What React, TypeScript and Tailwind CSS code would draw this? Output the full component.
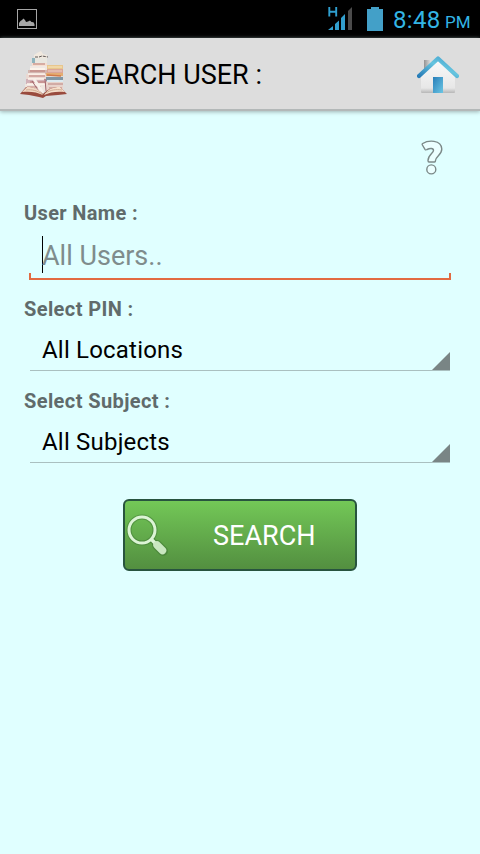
interface SpinnerProps {
  label: string
  value: string
}

function StatusBar() {
  return (
    <div className="flex h-[38px] items-center justify-between bg-black pl-[17px] pr-[10px]">
      <svg width="20" height="20" viewBox="0 0 20 20">
        <rect x="0.5" y="0.5" width="19" height="19" fill="none" stroke="#a6a6a6" />
        <path d="M2 17v-3l1.500-2L5 11l1.500-1.500L8 11l1 2 2-.5 2-1 1.500 1.500 2 .2 1 2v1.800z" fill="#a6a6a6" />
      </svg>
      <div className="flex items-center">
        <svg width="25" height="24" viewBox="0 0 25 24" className="mr-[14px]">
          <path d="M1.300 0v9.500M8.200 0v9.500M1.300 4.700h7" stroke="#2f9fd0" strokeWidth="1.900" fill="none" />
          <path d="M0 23l5-4v4zM7 23v-6l4-3.500V23zM13 23V11l4-4v16z" fill="#329fce" />
          <path d="M20 23V4l4-4v23z" fill="#4b4b4b" />
        </svg>
        <svg width="16" height="24" viewBox="0 0 16 24" className="mr-[10px]">
          <path d="M0 2h4V0h8v2h4v22H0z" fill="#43a0c8" />
        </svg>
        <div className="flex items-baseline pt-[3px] text-[#33b5e5]">
          <span className="w-[52px] text-[24px] leading-[35px] tracking-[0.3px] whitespace-nowrap">8:48</span>
          <span className="w-[25px] text-[17px] whitespace-nowrap">PM</span>
        </div>
      </div>
    </div>
  )
}

function BooksIcon() {
  return (
    <svg width="48" height="48" viewBox="0 0 48 48">
      {/* stacked volumes on the left */}
      <path d="M14 4l3-2 4-2 2 3 4 1v3l-3 1-10 1z" fill="#f1e9df" />
      <path d="M15 6h4l3-1 6 1" stroke="#615a58" strokeWidth="1" strokeDasharray="3 1" fill="none" />
      <path d="M12 7h15v5H12z" fill="#e9e7e0" />
      <path d="M12 7h3v5h-3z" fill="#8fb4bd" />
      <path d="M12 12h15v3H12z" fill="#f6ded0" />
      <path d="M13 13h12" stroke="#b77a74" />
      <path d="M10 15h17v4H10z" fill="#f0e8e3" />
      <path d="M8 19h19v4H8z" fill="#d3b6b0" />
      <path d="M6 23h21v5H6z" fill="#ead8d1" />
      <path d="M6 28h21v5H6z" fill="#d1b1b7" />
      <path d="M5 33h22v7H5z" fill="#eee5df" />
      <path d="M10 20h15M9 25h16M10 31h15M7 36h14" stroke="#bd7972" strokeWidth="1" />
      <path d="M10 18h15M8 23h17M8 28h16M7 33h18" stroke="#fff6ed" strokeWidth="1.500" />
      {/* stack on the right */}
      <path d="M27 14h16v4H27z" fill="#e8c68d" />
      <path d="M28 16h14" stroke="#f3dcb0" strokeWidth="1.500" />
      <path d="M27 18h16v4H27z" fill="#dba698" />
      <path d="M28 20h14" stroke="#ecd0c7" />
      <path d="M26 22h17v3H26z" fill="#e4ad72" />
      <path d="M27 24l14 1" stroke="#d27a48" strokeWidth="1.500" />
      <path d="M26 26h17v4H26z" fill="#8196a3" />
      <path d="M27 30h16" stroke="#dceaf0" strokeWidth="2" />
      <path d="M26 31h17v9H26z" fill="#e8d3cb" />
      <path d="M28 33h15M29 37h13" stroke="#bb8480" strokeWidth="1" />
      <path d="M14 28l9 14" stroke="#f7f0ea" strokeWidth="3" />
      <path d="M12 30l8 12M25 28l1 12" stroke="#a0636b" strokeWidth="1" />
      {/* open book in front */}
      <path d="M0 43l6-7c6 0 11 1 17 7 5-5 10-7 17-7l7 7-9 1-12 1-3 2-4-1-10-2z" fill="#994b3e" />
      <path d="M2 41l5-5c7 0 12 2 16 8-6-3-13-4-21-3z" fill="#f0d8c4" />
      <path d="M24 44c4-6 9-8 16-8l5 5c-8-1-15 0-21 3z" fill="#f5dfcb" />
      <path d="M6 39c6-1 12 1 16 4M26 42c4-3 10-4 16-3" stroke="#d2ad94" fill="none" />
    </svg>
  )
}

function HomeIcon() {
  return (
    <svg width="42" height="40" viewBox="0 0 42 40">
      <defs>
        <linearGradient id="roof" x1="0" y1="1" x2="1" y2="0">
          <stop stopColor="#287db8" />
          <stop offset="0.550" stopColor="#66c5df" />
          <stop offset="1" stopColor="#409dcc" />
        </linearGradient>
        <linearGradient id="door" x1="0" y1="0" x2="1" y2="1">
          <stop stopColor="#287eb9" />
          <stop offset="1" stopColor="#6bc6e4" />
        </linearGradient>
        <linearGradient id="wall" x1="0" y1="0" x2="0" y2="1">
          <stop stopColor="#fafafa" />
          <stop offset="0.850" stopColor="#e7e7e7" />
          <stop offset="1" stopColor="#b7b7b7" />
        </linearGradient>
        <linearGradient id="chimney">
          <stop stopColor="#939393" />
          <stop offset="1" stopColor="#d8d8d8" />
        </linearGradient>
      </defs>
      <path d="M7 5h6v11H7z" fill="url(#chimney)" />
      <path d="M4 20L21 5l17 15v17q0 1-1 1H5q-1 0-1-1z" fill="url(#wall)" />
      <path d="M2 21L21 3.500 40 21" fill="none" stroke="url(#roof)" strokeWidth="4.200" strokeLinecap="round" strokeLinejoin="round" />
      <path d="M16 22h10v16H16z" fill="url(#door)" />
    </svg>
  )
}

function HelpIcon() {
  return (
    <svg width="22" height="36" viewBox="0 0 22 36" fill="#ecffff" stroke="#7b8988" strokeWidth="1.400">
      <path d="M1.700 3.500C7 .2 20.300-.8 20.800 9c0 6-6.300 7.500-6.300 11.500q0 1.500-1 1.500H8q-1 0-1-1.500C7 15 12.500 13 12.500 10.500c0-2.500-3.500-2.500-6.500-1q-1.300.8-2-.2L1.400 5q-.5-1 .3-1.500z" />
      <circle cx="10.300" cy="29.400" r="4.500" />
    </svg>
  )
}

function SearchIcon() {
  return (
    <svg width="44" height="44" viewBox="0 0 44 44">
      <g fill="none" stroke="#396f30" strokeOpacity="0.450">
        <circle cx="17" cy="17" r="13" strokeWidth="5" />
        <path d="M27 27l4 4" strokeWidth="6" />
        <path d="M32 32l6 6" strokeWidth="10" strokeLinecap="round" />
      </g>
      <circle cx="17" cy="17" r="13" fill="none" stroke="#dcf4d5" strokeWidth="3" />
      <path d="M26 26l5 5" stroke="#dcf4d5" strokeWidth="3.500" />
      <path d="M32 32l5.500 5.500" stroke="#c9e7c0" strokeWidth="7.500" strokeLinecap="round" />
    </svg>
  )
}

function Label({ text, className = "" }: { text: string; className?: string }) {
  return <div className={`h-6 pl-6 text-[20px] leading-6 font-bold text-[#606b6b] ${className}`}>{text}</div>
}

function Spinner({ label, value }: SpinnerProps) {
  return (
    <>
      <Label text={label} className="tracking-[0.400px]" />
      <div className="mx-[30px] mb-[18px] flex h-[50px] items-end justify-between border-b border-[#aac0c0] pl-3">
        <span className="h-[40px] text-[24px] leading-[41px] tracking-[0.2px] text-black">{value}</span>
        <svg width="18" height="18" viewBox="0 0 18 18">
          <path d="M18 0v18H0z" fill="#798585" />
        </svg>
      </div>
    </>
  )
}

export default function App() {
  return (
    <div className="flex h-[854px] w-[480px] flex-col overflow-hidden bg-[#e0ffff] font-['Roboto',sans-serif]">
      <StatusBar />

      <header className="flex h-[73px] items-center border-b-2 border-[#b3b8b8] bg-[#dddddd] pt-[2px] pr-[21px] pl-[20px] shadow-[0_1px_4px_#9eb3b3]">
        <BooksIcon />
        <h1 className="ml-[6px] flex-1 pt-px text-[27px] leading-9 text-black">SEARCH USER :</h1>
        <HomeIcon />
      </header>

      <main className="flex flex-col">
        <div className="flex h-[90px] justify-end pt-[29px] pr-[37px]">
          <HelpIcon />
        </div>

        <Label text="User Name :" className="tracking-[0.350px]" />
        <div className="mx-[29px] mt-[11px] flex h-[37px] pl-[13px]">
          <span className="h-[37px] w-px bg-black" />
          <span className="-ml-px pt-[2px] text-[27px] leading-[37px] text-[#7f8c8c]">All Users..</span>
        </div>
        <div className="mx-[29px] mb-[17px] h-[7px] border-x-2 border-b-2 border-[#e26a41]" />

        <Spinner label="Select PIN :" value="All Locations" />
        <Spinner label="Select Subject :" value="All Subjects" />

        <button className="mx-auto mt-[18px] flex h-[72px] w-[234px] items-center rounded-md border-2 border-[#28543f] bg-linear-to-b from-[#73c857] to-[#538f40]">
          <SearchIcon />
          <span className="ml-[44px] pt-[2px] text-[27px] leading-9 text-white">SEARCH</span>
        </button>
      </main>
    </div>
  )
}
